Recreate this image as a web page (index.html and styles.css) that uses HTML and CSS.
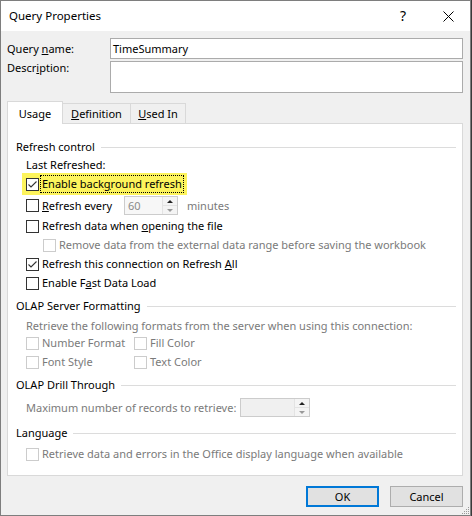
FILE: index.html
```html
<!DOCTYPE html>
<html>
<head>
<meta charset="utf-8">
<link rel="stylesheet" href="styles.css">
</head>
<body>
<div class="win">
  <div class="titlebar">
    <span class="title">Query Properties</span>
    <span class="help">?</span>
    <svg class="close" width="11" height="11" viewBox="0 0 11 11"><path d="M0.5 0.5L10.5 10.5M10.5 0.5L0.5 10.5" stroke="#000" stroke-width="1" fill="none"/></svg>
  </div>
  <div class="content">
    <div class="field f1">
      <span class="flabel">Query <u>n</u>ame:</span>
      <div class="input">TimeSummary</div>
    </div>
    <div class="field f2">
      <span class="flabel">Descr<u>i</u>ption:</span>
      <div class="input tall"></div>
    </div>
    <div class="tabs">
      <div class="tab active t-usage">Usa<u>g</u>e</div>
      <div class="tab t-def"><u>D</u>efinition</div>
      <div class="tab t-used"><u>U</u>sed In</div>
    </div>
    <div class="panel">
      <div class="group"><span>Refresh control</span><i class="rule"></i></div>
      <div class="row ind">Last Refreshed:</div>
      <div class="row hl mt-1">
        <span class="cb"><svg width="11" height="11" viewBox="0 0 11 11"><path d="M1.5 5.5L4 8L9.5 2.5" stroke="#333" stroke-width="1.1" fill="none"/></svg></span>
        <span class="lbl focus">Enable back<u>g</u>round refresh</span>
      </div>
      <div class="row ind mt1 h19">
        <span class="cb"></span>
        <span class="lbl w-every"><u>R</u>efresh every</span>
        <span class="spin s1"><span class="val">60</span><span class="arrows"><span class="up"></span><span class="down"></span></span></span>
        <span class="dim minutes">minutes</span>
      </div>
      <div class="row ind mt2">
        <span class="cb"></span>
        <span class="lbl">Refresh data when <u>o</u>pening the file</span>
      </div>
      <div class="row sub mt1">
        <span class="cb dis"></span>
        <span class="lbl dim">Remove data from the external data range before saving the workbook</span>
      </div>
      <div class="row ind mt1">
        <span class="cb"><svg width="11" height="11" viewBox="0 0 11 11"><path d="M1.5 5.5L4 8L9.5 2.5" stroke="#333" stroke-width="1.1" fill="none"/></svg></span>
        <span class="lbl">Refresh this connection on Refresh <u>A</u>ll</span>
      </div>
      <div class="row ind mt1">
        <span class="cb"></span>
        <span class="lbl">Enable F<u>a</u>st Data Load</span>
      </div>

      <div class="group mt5"><span>OLAP Server Formatting</span><i class="rule"></i></div>
      <div class="row ind mt2 dim">Retrieve the following formats from the server when using this connection:</div>
      <div class="row ind mt-1">
        <span class="cell"><span class="cb dis"></span><span class="lbl dim">Number Format</span></span>
        <span class="cb dis"></span><span class="lbl dim">Fill Color</span>
      </div>
      <div class="row ind mt1">
        <span class="cell"><span class="cb dis"></span><span class="lbl dim">Font Style</span></span>
        <span class="cb dis"></span><span class="lbl dim">Text Color</span>
      </div>

      <div class="group mt5"><span>OLAP Drill Through</span><i class="rule"></i></div>
      <div class="row ind mt4 h19">
        <span class="dim w-max">Maximum number of records to retrieve:</span>
        <span class="spin s2"><span class="val"></span><span class="arrows"><span class="up"></span><span class="down"></span></span></span>
      </div>

      <div class="group mt7"><span>Language</span><i class="rule"></i></div>
      <div class="row ind mt3">
        <span class="cb dis"></span>
        <span class="lbl dim">Retrieve data and errors in the Office display language when available</span>
      </div>
    </div>
    <div class="buttons">
      <button class="btn default">OK</button>
      <button class="btn">Cancel</button>
    </div>
  </div>
  <svg class="grip" width="10" height="10" viewBox="0 0 10 10">
    <rect x="8" y="2" width="1" height="1" fill="#9a9a9a"/>
    <rect x="6" y="4" width="1" height="1" fill="#9a9a9a"/>
    <rect x="8" y="4" width="1" height="1" fill="#9a9a9a"/>
    <rect x="4" y="6" width="1" height="1" fill="#9a9a9a"/>
    <rect x="6" y="6" width="1" height="1" fill="#9a9a9a"/>
    <rect x="8" y="6" width="1" height="1" fill="#9a9a9a"/>
    <rect x="2" y="8" width="1" height="1" fill="#9a9a9a"/>
    <rect x="4" y="8" width="1" height="1" fill="#9a9a9a"/>
    <rect x="6" y="8" width="1" height="1" fill="#9a9a9a"/>
    <rect x="8" y="8" width="1" height="1" fill="#9a9a9a"/>
  </svg>
</div>
</body>
</html>
```
FILE: styles.css
```css
* { box-sizing: border-box; }
body {
  margin: 0;
  width: 472px;
  height: 516px;
  overflow: hidden;
  background: #3a3a3a;
  font-family: "Noto Sans", "Open Sans", sans-serif;
  font-size: 11px;
  line-height: 16px;
  color: #000;
  white-space: nowrap;
}
.win {
  position: relative;
  width: 471px;
  height: 516px;
  border: 1px solid #7e7e7e;
  background: #f0f0f0;
}
.titlebar {
  height: 30px;
  background: #fff;
  display: flex;
  align-items: center;
  padding-left: 8px;
}
.title { flex: 1; font-size: 11.5px; }
.help {
  font-size: 14px;
  width: 10px;
  margin-right: 33px;
}
.close { margin-right: 16px; }

.content { padding: 7px 7px 0 6px; }
.field { display: flex; }
.f1 { align-items: center; height: 21px; }
.f2 { margin-top: 2px; }
.f2 .flabel { margin-top: -1px; }
.flabel { width: 103px; flex: none; }
.input {
  width: 356px;
  height: 21px;
  border: 1px solid #ababab;
  background: #fff;
  padding-left: 2px;
  line-height: 19px;
}
.input.tall { height: 32px; }

.tabs {
  display: flex;
  align-items: flex-end;
  height: 23px;
  margin-top: 8px;
  margin-bottom: -1px;
  position: relative;
  z-index: 1;
}
.tab {
  height: 20px;
  margin-bottom: 1px;
  margin-left: -1px;
  border: 1px solid #d9d9d9;
  border-bottom: none;
  background: #f0f0f0;
  text-align: center;
  padding-top: 2px;
}
.tab.active {
  height: 23px;
  margin-bottom: 0;
  margin-left: 0;
  background: #fff;
  padding-top: 4px;
  position: relative;
  z-index: 2;
}
.t-usage { width: 56px; }
.t-def { width: 69px; }
.t-used { width: 56px; }

.panel {
  width: 456px;
  height: 353px;
  border: 1px solid #d9d9d9;
  background: #fff;
  padding: 14px 6px 0 8px;
}
.group {
  display: flex;
  align-items: center;
  height: 18px;
}
.rule {
  flex: 1;
  height: 1px;
  background: #dcdcdc;
  margin-left: 6px;
}
.row {
  display: flex;
  align-items: center;
  height: 18px;
}
.h19 { height: 19px; }
.ind { margin-left: 10px; }
.sub { margin-left: 27px; }
.mt-1 { margin-top: -1px; }
.mt1 { margin-top: 1px; }
.mt2 { margin-top: 2px; }
.mt3 { margin-top: 3px; }
.mt4 { margin-top: 4px; }
.mt5 { margin-top: 5px; }
.mt7 { margin-top: 7px; }

.hl {
  width: fit-content;
  height: 22px;
  margin-left: 6px;
  padding: 0 3px 0 4px;
  background: #fdf45c;
}
.cb {
  flex: none;
  width: 13px;
  height: 13px;
  border: 1px solid #333;
  background: #fff;
  margin-right: 1px;
  display: flex;
}
.cb.dis { border-color: #cccccc; }
.lbl {
  border: 1px solid transparent;
  padding: 0 1px;
  line-height: 16px;
}
.lbl.focus { border: 1px dotted #000; }
.dim { color: #7a7a7a; }
.cell { display: flex; align-items: center; width: 108px; flex: none; }

.w-every { width: 84px; flex: none; }
.w-max { width: 214px; flex: none; }
.spin {
  display: flex;
  height: 19px;
  border: 1px solid #cccccc;
  flex: none;
}
.s1 { width: 54px; background: #f7f7f7; }
.s2 { width: 70px; background: #f0f0f0; }
.val {
  flex: 1;
  color: #8a8a8a;
  padding-left: 3px;
  line-height: 17px;
}
.arrows {
  width: 15px;
  display: flex;
  flex-direction: column;
  border-left: 1px solid #e3e3e3;
}
.up, .down {
  flex: 1;
  position: relative;
  background: #f4f4f4;
}
.up { border-bottom: 1px solid #e3e3e3; }
.up::after, .down::after {
  content: "";
  position: absolute;
  left: 4px;
  width: 0;
  height: 0;
  border-left: 3px solid transparent;
  border-right: 3px solid transparent;
}
.up::after { top: 3px; border-bottom: 3px solid #222; }
.down::after { top: 3px; border-top: 3px solid #999; }
.minutes { margin-left: 9px; }

.buttons {
  display: flex;
  justify-content: flex-end;
  gap: 11px;
  margin-top: 10px;
}
.btn {
  width: 73px;
  height: 21px;
  border: 1px solid #adadad;
  background: #e1e1e1;
  font: inherit;
  color: #000;
  padding: 0;
}
.btn.default { border: 2px solid #0078d7; }
.grip {
  position: absolute;
  right: 0;
  bottom: 0;
}
```
